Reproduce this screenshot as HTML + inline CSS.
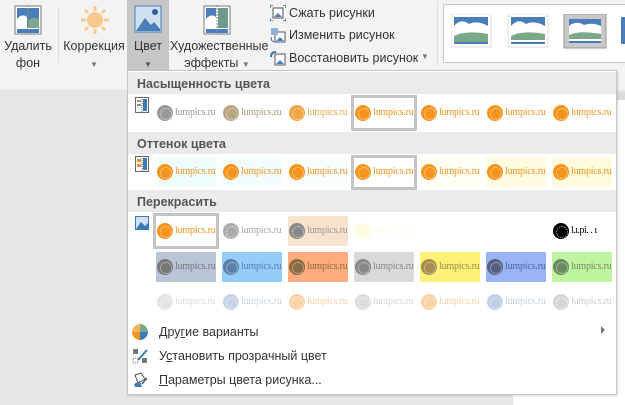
<!DOCTYPE html>
<html><head><meta charset="utf-8"><style>
*{margin:0;padding:0;box-sizing:border-box}
body{width:625px;height:405px;overflow:hidden;position:relative;background:#e6e6e6;font-family:"Liberation Sans",sans-serif;font-size:12px;color:#262626}
.a{position:absolute}
.rib{left:0;top:0;width:625px;height:90px;background:#f3f3f3}
.lbl{position:absolute;text-align:center;font-size:12.5px;line-height:17px;color:#333}
.th{position:absolute;width:60px;height:30px;overflow:hidden}
.th i{position:absolute;left:1px;top:7px;width:16px;height:16px;border-radius:50%;background:#f7941d}
.th i:after{content:"";position:absolute;left:3px;top:3px;width:10px;height:10px;border-radius:50%;border:1px dotted rgba(255,255,255,.7)}
.th b{position:absolute;left:19px;top:9px;font:10px "Liberation Serif",serif;color:#f7941d;white-space:nowrap;font-weight:normal;letter-spacing:-0.2px}
.hd{position:absolute;left:128px;width:488px;height:22px;background:#ebebeb;font-weight:bold;font-size:12.5px;color:#555;padding:5px 0 0 9px}
.sel{position:absolute;border:3px solid #c4c4c4}
.mi{position:absolute;left:159px;font-size:12.5px;color:#333}
</style></head><body>
<div class="a rib"></div>
<div class="a" style="left:616px;top:92px;width:9px;height:8px;background:#dcdcdc"></div>
<div class="a" style="left:616px;top:100px;width:9px;height:305px;background:#fff"></div>
<div class="a" style="left:513px;top:394px;width:112px;height:11px;background:#fff"></div>
<div class="a" style="left:127px;top:0;width:42px;height:70px;background:#c6c6c6"></div>
<svg class="a" style="left:14px;top:5px" width="28" height="30"><rect x="1" y="1" width="26" height="28" fill="#fff" stroke="#777"/><rect x="3" y="3" width="22" height="20" fill="#4a7ebb"/><path d="M3 14 Q8 8 13 12 L13 23 L3 23Z" fill="#fff"/><path d="M14 23 L14 15 Q19 11 25 14 L25 23Z" fill="#7aa889"/><rect x="3" y="24" width="22" height="4" fill="#4a7ebb"/><line x1="14" y1="0" x2="14" y2="30" stroke="#888" stroke-dasharray="2 1"/></svg>
<svg class="a" style="left:80px;top:5px" width="30" height="30"><g stroke="#f8c98e" stroke-width="3"><line x1="15" y1="1" x2="15" y2="6"/><line x1="15" y1="24" x2="15" y2="29"/><line x1="1" y1="15" x2="6" y2="15"/><line x1="24" y1="15" x2="29" y2="15"/><line x1="5" y1="5" x2="8" y2="8"/><line x1="22" y1="22" x2="25" y2="25"/><line x1="25" y1="5" x2="22" y2="8"/><line x1="5" y1="25" x2="8" y2="22"/></g><circle cx="15" cy="15" r="8" fill="#f8c98e"/></svg>
<svg class="a" style="left:134px;top:5px" width="28" height="28"><rect x="1" y="1" width="26" height="26" fill="#cfe0f0" stroke="#4a7ebb"/><circle cx="21" cy="7" r="3" fill="#2e5f9a"/><path d="M2 26 L11 13 L17 20 L20 17 L26 24 L26 26Z" fill="#4a7ebb"/></svg>
<svg class="a" style="left:203px;top:5px" width="28" height="30"><rect x="1" y="1" width="26" height="28" fill="#fff" stroke="#777"/><rect x="3" y="3" width="10" height="20" fill="#4a7ebb"/><path d="M3 14 Q8 8 13 12 L13 23 L3 23Z" fill="#fff"/><rect x="15" y="3" width="10" height="20" fill="#6f9a8a"/><rect x="3" y="24" width="22" height="4" fill="#4a7ebb"/><line x1="14" y1="0" x2="14" y2="30" stroke="#888" stroke-dasharray="2 1"/></svg>
<div class="lbl" style="left:0;top:38px;width:56px">Удалить<br>фон</div>
<div class="lbl" style="left:62px;top:38px;width:64px">Коррекция<br><span style="font-size:8px;color:#777">▼</span></div>
<div class="lbl" style="left:127px;top:38px;width:42px">Цвет<br><span style="font-size:8px;color:#555">▼</span></div>
<div class="lbl" style="left:170px;top:38px;width:94px">Художественные<br>эффекты <span style="font-size:8px;color:#777">▼</span></div>
<div class="a" style="left:58px;top:8px;width:1px;height:55px;background:#ddd"></div>
<svg class="a" style="left:270px;top:5px" width="16" height="16"><rect x="3" y="3" width="10" height="10" fill="#fff" stroke="#555"/><path d="M4 12 L8 8 L12 12Z" fill="#4a7ebb"/><path d="M0 3V0H3M13 0H16V3M16 13V16H13M3 16H0V13" stroke="#2e75b6" fill="none" stroke-width="1.5"/></svg>
<div class="a" style="left:289px;top:6px;font-size:12.5px;color:#333">Сжать рисунки</div>
<svg class="a" style="left:270px;top:27px" width="16" height="16"><rect x="5" y="5" width="10" height="10" fill="#fff" stroke="#555"/><path d="M6 14 L10 10 L14 14Z" fill="#4a7ebb"/><rect x="1" y="1" width="7" height="7" fill="#8fb3d9"/><path d="M1 10 Q1 15 5 15" stroke="#2e75b6" fill="none"/></svg>
<div class="a" style="left:289px;top:28px;font-size:12.5px;color:#333">Изменить рисунок</div>
<svg class="a" style="left:270px;top:50px" width="16" height="16"><rect x="5" y="4" width="10" height="11" fill="#fff" stroke="#555"/><path d="M6 14 L10 10 L14 14Z" fill="#4a7ebb"/><path d="M1 7 Q1 2 6 2" stroke="#2e75b6" fill="none" stroke-width="2"/></svg>
<div class="a" style="left:289px;top:51px;font-size:12.5px;color:#333">Восстановить рисунок</div>
<div class="a" style="left:421px;top:52px;font-size:8px;color:#777">▼</div>
<div class="a" style="left:437px;top:2px;width:1px;height:64px;background:#ddd"></div>
<div class="a" style="left:443px;top:4px;width:190px;height:59px;background:#fff;border:1px solid #c6c6c6"></div>
<svg class="a" style="left:451px;top:14px" width="174" height="36">
<g><rect x="0" y="0" width="40" height="33" fill="#fff" stroke="#ddd"/><rect x="3" y="3" width="34" height="27" fill="#4a7ebb"/><path d="M3 12 Q10 4 18 10 Q26 6 37 12 L37 22 L3 22Z" fill="#fff"/><path d="M3 28 L3 22 Q15 16 37 20 L37 28Z" fill="#7aa889"/></g>
<g transform="translate(57,0)"><rect x="0" y="0" width="40" height="33" fill="#fff" stroke="#ddd"/><rect x="3" y="3" width="34" height="27" fill="#4a7ebb"/><path d="M3 12 Q10 4 18 10 Q26 6 37 12 L37 22 L3 22Z" fill="#fff"/><path d="M3 26 L3 22 Q15 16 37 20 L37 26Z" fill="#7aa889"/><rect x="3" y="26" width="34" height="2" fill="#fff"/></g>
<g transform="translate(113,0)"><rect x="0" y="0" width="42" height="34" fill="#c8c8c8" stroke="#999"/><rect x="5" y="5" width="32" height="24" fill="#4a7ebb"/><path d="M5 12 Q12 6 20 11 Q28 8 37 12 L37 22 L5 22Z" fill="#fff"/><path d="M5 25 L5 21 Q15 16 37 20 L37 25Z" fill="#7aa889"/><rect x="5" y="25" width="32" height="2" fill="#fff"/></g>
<rect x="170" y="3" width="6" height="27" fill="#4a7ebb"/>
</svg>
<div class="a" style="left:127px;top:70px;width:490px;height:325px;background:#fff;border:1px solid #c6c6c6;box-shadow:1px 1px 2px rgba(0,0,0,.15)"></div>
<div class="hd" style="top:72px">Насыщенность цвета</div>
<div class="hd" style="top:132px">Оттенок цвета</div>
<div class="hd" style="top:190px">Перекрасить</div>
<svg class="a" style="left:135px;top:97px" width="14" height="16"><rect x="0.5" y="0.5" width="13" height="15" fill="#fff" stroke="#666"/><rect x="2" y="3" width="4" height="2" fill="#999"/><rect x="2" y="7" width="4" height="2" fill="#888"/><rect x="8" y="2" width="4" height="12" fill="#3a7ab8"/><line x1="7" y1="0" x2="7" y2="16" stroke="#666" stroke-dasharray="1 1"/></svg>
<svg class="a" style="left:135px;top:156px" width="14" height="16"><rect x="0.5" y="0.5" width="13" height="15" fill="#fff" stroke="#666"/><rect x="2" y="3" width="4" height="3" fill="#f7941d"/><rect x="2" y="8" width="4" height="3" fill="#f7941d"/><rect x="8" y="2" width="4" height="12" fill="#3a7ab8"/><line x1="7" y1="0" x2="7" y2="16" stroke="#666" stroke-dasharray="1 1"/></svg>
<svg class="a" style="left:135px;top:216px" width="14" height="14"><rect x="0.5" y="0.5" width="13" height="13" fill="#cfe0f0" stroke="#3a7ab8"/><path d="M1 13 L6 6 L10 10 L13 7 L13 13Z" fill="#3a7ab8"/></svg>

<div class="th" style="left:156px;top:98px"><i style="background:#999"></i><b style="color:#999">lumpics.ru</b></div>
<div class="th" style="left:222px;top:98px"><i style="background:#b8a47e"></i><b style="color:#aa9a80">lumpics.ru</b></div>
<div class="th" style="left:288px;top:98px"><i style="background:#f2a544"></i><b style="color:#e8a850">lumpics.ru</b></div>
<div class="th" style="left:354px;top:98px"><i></i><b>lumpics.ru</b></div>
<div class="th" style="left:420px;top:98px"><i></i><b>lumpics.ru</b></div>
<div class="th" style="left:486px;top:98px"><i></i><b>lumpics.ru</b></div>
<div class="th" style="left:552px;top:98px"><i></i><b>lumpics.ru</b></div>
<div class="sel" style="left:351px;top:95px;width:66px;height:36px"></div>
<div class="th" style="left:156px;top:157px;background:#effcfd"><i></i><b>lumpics.ru</b></div>
<div class="th" style="left:222px;top:157px;background:#f2fcfd"><i></i><b>lumpics.ru</b></div>
<div class="th" style="left:288px;top:157px;background:#fafdfd"><i></i><b>lumpics.ru</b></div>
<div class="th" style="left:354px;top:157px"><i></i><b>lumpics.ru</b></div>
<div class="th" style="left:420px;top:157px;background:#fffef3"><i></i><b>lumpics.ru</b></div>
<div class="th" style="left:486px;top:157px;background:#fffce2"><i></i><b>lumpics.ru</b></div>
<div class="th" style="left:552px;top:157px;background:#fffbdc"><i></i><b>lumpics.ru</b></div>
<div class="sel" style="left:351px;top:155px;width:66px;height:35px"></div>
<div class="th" style="left:156px;top:216px"><i></i><b>lumpics.ru</b></div>
<div class="th" style="left:222px;top:216px"><i style="background:#aaa"></i><b style="color:#aaa">lumpics.ru</b></div>
<div class="th" style="left:288px;top:216px;background:#f7e3cc"><i style="background:#888"></i><b style="color:#999">lumpics.ru</b></div>
<div class="th" style="left:354px;top:216px"><i style="background:#fffbe0"></i><b style="color:#fffae8">lumpics.ru</b></div>
<div class="th" style="left:552px;top:216px"><i style="background:#000"></i><b style="color:#000;letter-spacing:-0.5px">l.ı.pi. . ı</b></div>
<div class="sel" style="left:153px;top:213px;width:66px;height:36px"></div>
<div class="th" style="left:156px;top:252px;background:#b9c5d6"><i style="background:#777"></i><b style="color:#777">lumpics.ru</b></div>
<div class="th" style="left:222px;top:252px;background:#94cdf9"><i style="background:#5a7fa8"></i><b style="color:#5a7fa8">lumpics.ru</b></div>
<div class="th" style="left:288px;top:252px;background:#ffab80"><i style="background:#8a6a40"></i><b style="color:#8a7040">lumpics.ru</b></div>
<div class="th" style="left:354px;top:252px;background:#d9d9d9"><i style="background:#888"></i><b style="color:#888">lumpics.ru</b></div>
<div class="th" style="left:420px;top:252px;background:#fff176"><i style="background:#a88c50"></i><b style="color:#a08c50">lumpics.ru</b></div>
<div class="th" style="left:486px;top:252px;background:#9ab3f5"><i style="background:#556080"></i><b style="color:#5068a0">lumpics.ru</b></div>
<div class="th" style="left:552px;top:252px;background:#bff5a0"><i style="background:#6a8a60"></i><b style="color:#7a8a60">lumpics.ru</b></div>
<div class="th" style="left:156px;top:287px"><i style="background:#e4e4e4"></i><b style="color:#ddd">lumpics.ru</b></div>
<div class="th" style="left:222px;top:287px"><i style="background:#c6d4e6"></i><b style="color:#c8d4e4">lumpics.ru</b></div>
<div class="th" style="left:288px;top:287px"><i style="background:#f9d3a6"></i><b style="color:#f5d0a8">lumpics.ru</b></div>
<div class="th" style="left:354px;top:287px"><i style="background:#ddd"></i><b style="color:#d6d6d6">lumpics.ru</b></div>
<div class="th" style="left:420px;top:287px"><i style="background:#f9d3a6"></i><b style="color:#f5d3a8">lumpics.ru</b></div>
<div class="th" style="left:486px;top:287px"><i style="background:#bfd0e4"></i><b style="color:#c4d2e2">lumpics.ru</b></div>
<div class="th" style="left:552px;top:287px"><i style="background:#d6d6d6"></i><b style="color:#ccc">lumpics.ru</b></div>
<svg class="a" style="left:132px;top:324px" width="16" height="16"><path d="M8 8 L8 0 A8 8 0 0 1 16 8Z" fill="#7aa889"/><path d="M8 8 L16 8 A8 8 0 0 1 8 16Z" fill="#3a7ab8"/><path d="M8 8 L8 16 A8 8 0 0 1 0 8Z" fill="#f7941d"/><path d="M8 8 L0 8 A8 8 0 0 1 8 0Z" fill="#f7b85d"/></svg>
<div class="mi" style="top:325px">Дру<u>г</u>ие варианты</div>
<div class="a" style="left:601px;top:326px;width:0;height:0;border-left:4px solid #777;border-top:4px solid transparent;border-bottom:4px solid transparent"></div>
<svg class="a" style="left:132px;top:348px" width="16" height="16"><rect x="1" y="1" width="5" height="5" fill="#777"/><rect x="10" y="10" width="5" height="5" fill="#777"/><rect x="1" y="10" width="5" height="5" fill="none" stroke="#777" stroke-dasharray="1 1"/><line x1="6" y1="12" x2="15" y2="2" stroke="#3a7ab8" stroke-width="2"/></svg>
<div class="mi" style="top:349px">У<u>с</u>тановить прозрачный цвет</div>
<svg class="a" style="left:132px;top:372px" width="16" height="16"><path d="M3 3 L9 1 L13 7 L6 11Z" fill="#fff" stroke="#555"/><path d="M2 12 L8 9 L10 15 L3 15Z" fill="#3a7ab8"/><line x1="10" y1="12" x2="15" y2="6" stroke="#555" stroke-width="1.5"/></svg>
<div class="mi" style="top:373px"><u>П</u>араметры цвета рисунка...</div>
</body></html>
